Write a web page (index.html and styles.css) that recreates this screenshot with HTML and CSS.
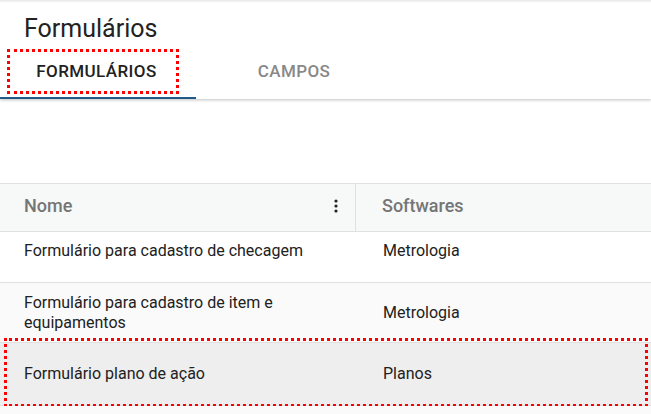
FILE: index.html
```html
<!DOCTYPE html>
<html lang="pt-BR">
<head>
<meta charset="utf-8">
<title>Formulários</title>
<link rel="stylesheet" href="styles.css">
</head>
<body>
<header class="appbar">
  <h1 class="title">Formulários</h1>
  <nav class="tabs">
    <div class="tab tab-active"><span class="tab-label">FORMULÁRIOS</span></div>
    <div class="tab"><span class="tab-label">CAMPOS</span></div>
  </nav>
</header>
<main class="content">
  <div class="table">
    <div class="row head">
      <div class="cell c1 hcell"><span>Nome</span>
        <svg class="kebab" width="12" height="16" viewBox="0 0 12 16"><circle cx="6" cy="3" r="1.6" fill="#222"/><circle cx="6" cy="8" r="1.6" fill="#222"/><circle cx="6" cy="13" r="1.6" fill="#222"/></svg>
      </div>
      <div class="cell c2 hcell">Softwares</div>
    </div>
    <div class="row r1">
      <div class="cell c1">Formulário para cadastro de checagem</div>
      <div class="cell c2">Metrologia</div>
    </div>
    <div class="row r2">
      <div class="cell c1 wrap">Formulário para cadastro de item e equipamentos</div>
      <div class="cell c2">Metrologia</div>
    </div>
    <div class="row r3 selected">
      <div class="cell c1">Formulário plano de ação</div>
      <div class="cell c2">Planos</div>
    </div>
    <div class="row r4"></div>
  </div>
</main>
</body>
</html>
```

FILE: styles.css
```css
html, body {
  margin: 0;
  padding: 0;
  background: #ffffff;
  font-family: Roboto, "Liberation Sans", sans-serif;
  color: #212121;
  overflow: hidden;
}

.appbar {
  background: #fff;
  box-shadow: inset 0 4px 3px -3px rgba(0,0,0,0.12), 0 1px 3px rgba(0,0,0,0.25);
  position: relative;
  z-index: 1;
}

.title {
  margin: 0;
  padding: 12px 0 0 24px;
  font-size: 25px;
  font-weight: 400;
  line-height: 34px;
  height: 40px;
  box-sizing: border-box;
  color: #222;
}

.tabs {
  display: flex;
  padding-top: 9px;
  box-sizing: border-box;
  height: 59px;
}

.tab {
  width: 196px;
  display: flex;
  align-items: center;
  justify-content: center;
  font-size: 17px;
  font-weight: 500;
  letter-spacing: 0.4px;
  color: #888;
  position: relative;
  box-sizing: border-box;
  border-bottom: 2px solid transparent;
  padding-bottom: 5px;
}

.tab-active {
  color: #212121;
  border-bottom-color: #215a89;
}

.tab-active::before {
  content: "";
  position: absolute;
  left: 7px;
  top: 0;
  width: 172px;
  height: 45px;
  box-sizing: border-box;
  border: 3px dotted #ff0000;
}

.tab-active .tab-label { padding-right: 3px; }

.content {
  padding-top: 84px;
}

.table {
  border-top: 1px solid #e0e0e0;
}

.row {
  display: flex;
  border-bottom: 1px solid #e0e0e0;
  font-size: 16px;
  line-height: 20px;
  position: relative;
}

.cell { box-sizing: border-box; }
.c1 { width: 356px; padding-left: 24px; padding-right: 24px; }
.c2 { flex: 1; padding-left: 27px; }

.head {
  background: #f7f8f8;
  height: 48px;
  box-sizing: border-box;
}
.hcell {
  display: flex;
  align-items: center;
  font-size: 18px;
  font-weight: 500;
  color: #757575;
  padding-bottom: 3px;
}
.head .c1 {
  justify-content: space-between;
  padding-right: 13px;
  border-right: 1px solid #e0e0e0;
}
.head .c2 { padding-left: 26px; }
.kebab { display: block; }

.r1 { background: #fff; height: 51px; box-sizing: border-box; padding-top: 9px; }
.r2 { background: #fafafa; height: 60px; box-sizing: border-box; align-items: center; }
.r3 { background: #eeeeee; height: 63px; box-sizing: border-box; align-items: center; }
.r4 { background: #fafafa; height: 9px; border-bottom: none; }

.wrap { padding-right: 40px; }

.selected::after {
  content: "";
  position: absolute;
  left: 4px;
  right: 3px;
  top: -5px;
  bottom: -2px;
  border: 3px dotted #ff0000;
}
```
